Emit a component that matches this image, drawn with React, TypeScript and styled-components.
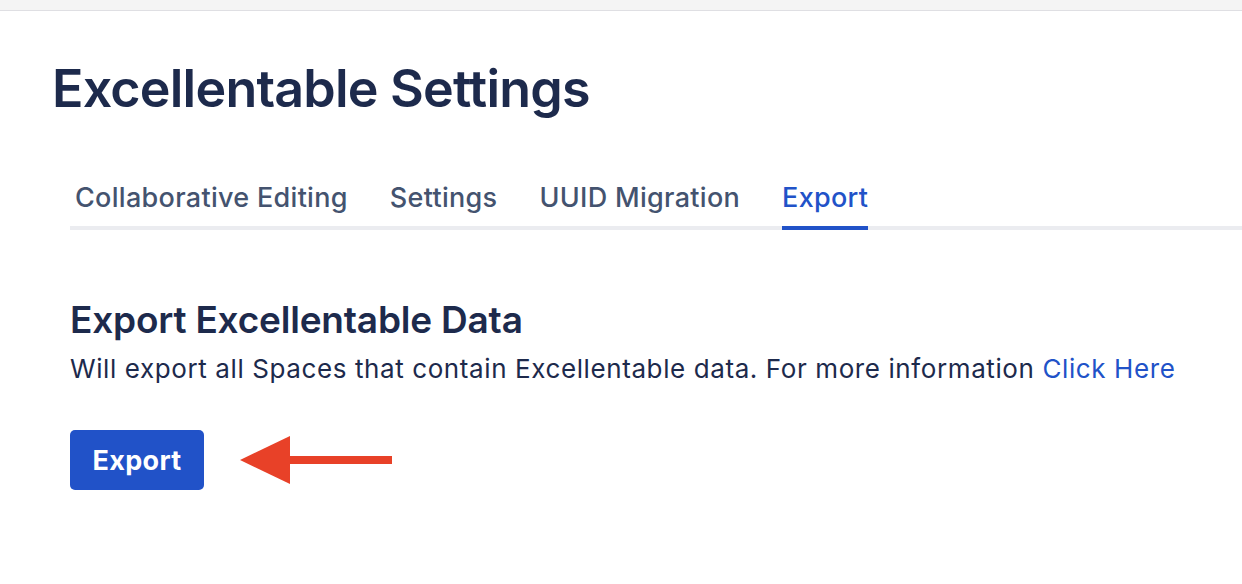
import styled, { createGlobalStyle } from "styled-components"

const GlobalStyle = createGlobalStyle`
  html, body {
    margin: 0;
    padding: 0;
    background: #fff;
    font-family: Inter, "Noto Sans", sans-serif;
  }
`

const TopBar = styled.div`
  height: 10px;
  background: #f4f4f4;
  border-bottom: 1px solid #dfdfe3;
`

const Page = styled.main`
  padding: 0 0 0 52px;
`

const Title = styled.h1`
  margin: 0;
  padding-top: 46px;
  font-size: 52px;
  line-height: 64px;
  font-weight: 600;
  letter-spacing: -0.8px;
  color: #1d2a4c;
`

const Section = styled.div`
  padding-left: 18px;
`

const TabList = styled.nav`
  display: flex;
  gap: 42px;
  margin-top: 60px;
  padding-left: 5px;
  border-bottom: 4px solid #ebecf0;
`

const Tab = styled.div<{ active?: boolean }>`
  font-size: 27px;
  line-height: 34px;
  font-weight: 500;
  letter-spacing: 0.3px;
  padding-bottom: 11px;
  margin-bottom: -4px;
  color: ${p => (p.active ? "#2152c8" : "#44536f")};
  border-bottom: 4px solid ${p => (p.active ? "#2152c8" : "transparent")};
`

const Heading = styled.h2`
  margin: 68px 0 0;
  font-size: 37px;
  line-height: 44px;
  font-weight: 600;
  color: #1d2a4c;
  letter-spacing: -0.2px;
`

const Text = styled.p`
  margin: 10px 0 0;
  font-size: 26px;
  line-height: 34px;
  letter-spacing: 0.6px;
  color: #1d2a4c;
`

const Link = styled.a`
  color: #2152c8;
  text-decoration: none;
`

const ActionRow = styled.div`
  display: flex;
  align-items: center;
  gap: 36px;
  margin-top: 44px;
`

const Button = styled.button`
  width: 134px;
  height: 60px;
  border: none;
  border-radius: 5px;
  background: #2152c8;
  color: #fff;
  font-family: inherit;
  font-size: 27px;
  font-weight: 700;
  letter-spacing: 0.3px;
`

const tabs = ["Collaborative Editing", "Settings", "UUID Migration", "Export"]

export default function App() {
  return (
    <>
      <GlobalStyle />
      <TopBar />
      <Page>
        <Title>Excellentable Settings</Title>
        <Section>
          <TabList>
            {tabs.map(t => (
              <Tab key={t} active={t === "Export"}>
                {t}
              </Tab>
            ))}
          </TabList>
          <Heading>Export Excellentable Data</Heading>
          <Text>
            Will export all Spaces that contain Excellentable data. For more
            information <Link href="#">Click Here</Link>
          </Text>
          <ActionRow>
            <Button>Export</Button>
            <svg width="154" height="52" viewBox="0 0 154 52">
              <polygon points="0,26 50,2 50,50" fill="#e84128" />
              <rect x="48" y="22" width="104" height="8" fill="#e84128" />
            </svg>
          </ActionRow>
        </Section>
      </Page>
    </>
  )
}
